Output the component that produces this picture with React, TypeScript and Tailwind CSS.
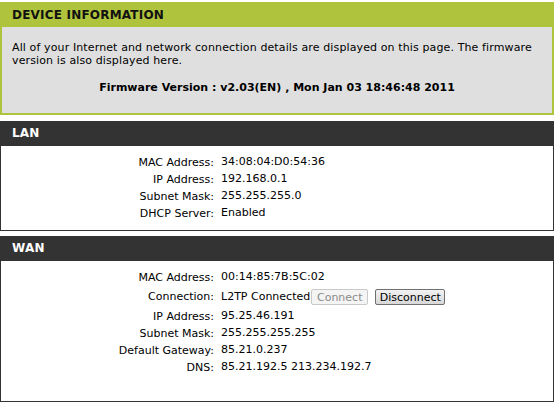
import React from "react";

const lanRows = [
  { label: "MAC Address:", value: "34:08:04:D0:54:36" },
  { label: "IP Address:", value: "192.168.0.1" },
  { label: "Subnet Mask:", value: "255.255.255.0" },
  { label: "DHCP Server:", value: "Enabled" },
];

const wanRows = [
  { label: "MAC Address:", value: "00:14:85:7B:5C:02" },
  { label: "Connection:", value: "L2TP Connected", buttons: true },
  { label: "IP Address:", value: "95.25.46.191" },
  { label: "Subnet Mask:", value: "255.255.255.255" },
  { label: "Default Gateway:", value: "85.21.0.237" },
  { label: "DNS:", value: "85.21.192.5 213.234.192.7" },
];

type Row = { label: string; value: string; buttons?: boolean };

const InfoRows: React.FC<{ rows: Row[] }> = ({ rows }) => (
  <div className="grid grid-cols-[213px_1fr] gap-x-[7px]">
    {rows.map((row, index) => (
      <React.Fragment key={index}>
        <div
          className={`text-right ${row.buttons ? "h-[22px] leading-[22px]" : "h-[17px] leading-[17px]"}`}
        >
          {row.label}
        </div>
        <div
          className={`flex items-center ${row.buttons ? "h-[22px]" : "h-[17px]"}`}
        >
          <span>{row.value}</span>
          {row.buttons && (
            <>
              <button
                disabled
                className="ml-[1px] h-[16px] w-[57px] rounded-[2px] border border-[#c9c9c9] bg-[#f4f4f4] text-[11px] leading-none text-[#8a8a8a]"
              >
                Connect
              </button>
              <button className="ml-[7px] h-[16px] w-[70px] rounded-[2px] border border-[#707070] bg-gradient-to-b from-[#f2f2f2] to-[#d8d8d8] text-[11px] leading-none text-black">
                Disconnect
              </button>
            </>
          )}
        </div>
      </React.Fragment>
    ))}
  </div>
);

const App: React.FC = () => {
  return (
    <div className="w-[558px] h-[403px] bg-white pt-[2px] font-['DejaVu_Sans',sans-serif] text-[11px] text-black">
      {/* Device information */}
      <div className="w-[554px] border-2 border-[#afc33c] bg-[#dfdfdf]">
        <div className="h-[23px] bg-[#afc33c] pl-[10px] text-[12px] font-bold leading-[23px] tracking-[0.2px] text-[#111]">
          DEVICE INFORMATION
        </div>
        <div className="h-[86px] px-[10px] pt-[14px]">
          <p className="leading-[13px] tracking-[0.12px]">
            All of your Internet and network connection details are displayed on this page. The firmware version is also displayed here.
          </p>
          <p className="mt-[14px] text-center font-bold leading-[13px]">
            Firmware Version : v2.03(EN) , Mon Jan 03 18:46:48 2011
          </p>
        </div>
      </div>

      {/* LAN */}
      <div className="mt-[6px] w-[554px]">
        <div className="h-[25px] bg-[#333333] pl-[12px] text-[12px] font-bold leading-[25px] tracking-[0.2px] text-white">
          LAN
        </div>
        <div className="h-[85px] border-x border-b border-[#333333] bg-white pt-[8px]">
          <InfoRows rows={lanRows} />
        </div>
      </div>

      {/* WAN */}
      <div className="mt-[5px] w-[554px]">
        <div className="h-[25px] bg-[#333333] pl-[12px] text-[12px] font-bold leading-[25px] tracking-[0.2px] text-white">
          WAN
        </div>
        <div className="h-[141px] border-x border-b border-[#333333] bg-white pt-[8px]">
          <InfoRows rows={wanRows} />
        </div>
      </div>
    </div>
  );
};

export default App;
